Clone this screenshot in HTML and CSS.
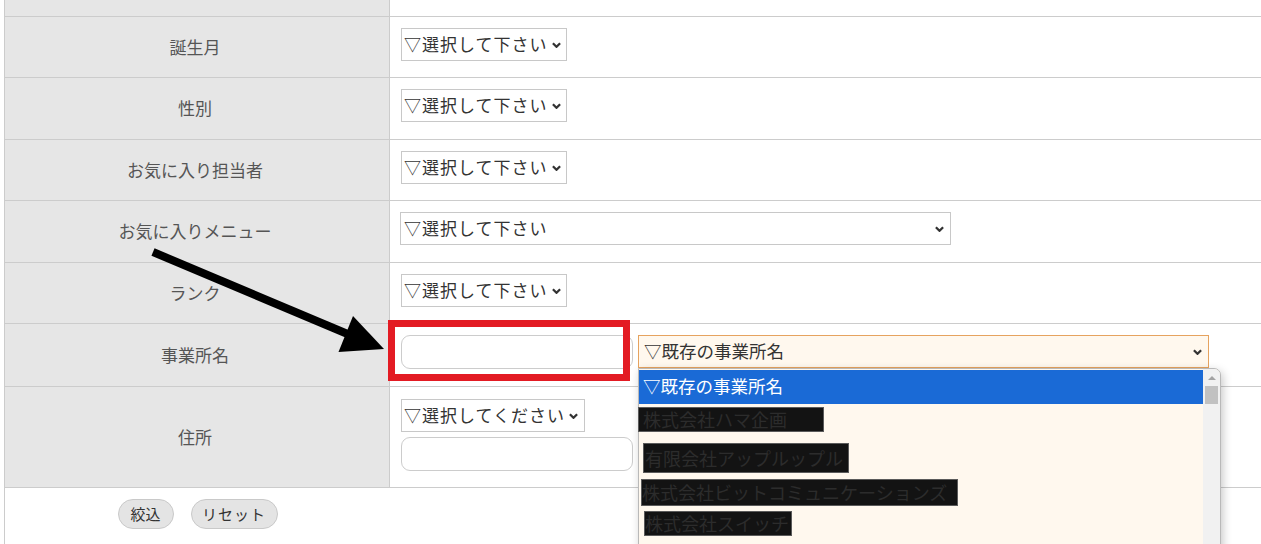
FILE: index.html
```html
<!DOCTYPE html>
<html lang="ja">
<head>
<meta charset="utf-8">
<title>検索フォーム</title>
<link rel="stylesheet" href="styles.css">
</head>
<body>
<div class="page">
  <div class="form">
    <div class="row h-top"><div class="label"></div><div class="value"></div></div>
    <div class="row h61"><div class="label">誕生月</div>
      <div class="value"><div class="select s-short"><span class="sel-text">▽選択して下さい</span><svg class="chev" viewBox="0 0 10 6"><path d="M1 1 L5 5 L9 1" /></svg></div></div></div>
    <div class="row h62"><div class="label">性別</div>
      <div class="value"><div class="select s-short"><span class="sel-text">▽選択して下さい</span><svg class="chev" viewBox="0 0 10 6"><path d="M1 1 L5 5 L9 1" /></svg></div></div></div>
    <div class="row h61"><div class="label">お気に入り担当者</div>
      <div class="value"><div class="select s-short"><span class="sel-text">▽選択して下さい</span><svg class="chev" viewBox="0 0 10 6"><path d="M1 1 L5 5 L9 1" /></svg></div></div></div>
    <div class="row h62"><div class="label">お気に入りメニュー</div>
      <div class="value"><div class="select s-wide"><span class="sel-text">▽選択して下さい</span><svg class="chev" viewBox="0 0 10 6"><path d="M1 1 L5 5 L9 1" /></svg></div></div></div>
    <div class="row h61"><div class="label">ランク</div>
      <div class="value"><div class="select s-short"><span class="sel-text">▽選択して下さい</span><svg class="chev" viewBox="0 0 10 6"><path d="M1 1 L5 5 L9 1" /></svg></div></div></div>
    <div class="row h63"><div class="label">事業所名</div>
      <div class="value biz">
        <div class="text-input"></div>
        <div class="select s-biz"><span class="sel-text">▽既存の事業所名</span><svg class="chev" viewBox="0 0 10 6"><path d="M1 1 L5 5 L9 1" /></svg></div>
      </div></div>
    <div class="row h101"><div class="label">住所</div>
      <div class="value addr">
        <div class="select s-addr"><span class="sel-text">▽選択してください</span><svg class="chev" viewBox="0 0 10 6"><path d="M1 1 L5 5 L9 1" /></svg></div>
        <div class="text-input"></div>
      </div></div>
    <div class="btn-row">
      <div class="btn-cell">
        <button class="btn btn-filter">絞込</button>
        <button class="btn btn-reset">リセット</button>
      </div>
    </div>
  </div>

  <div class="dropdown">
    <div class="opts">
      <div class="opt-selected">▽既存の事業所名</div>
      <div class="bar b1">株式会社ハマ企画</div>
      <div class="bar b2">有限会社アップルップル</div>
      <div class="bar b3">株式会社ビットコミュニケーションズ</div>
      <div class="bar b4">株式会社スイッチ</div>
    </div>
    <div class="scrollbar">
      <div class="sb-up"></div>
      <div class="sb-thumb"></div>
    </div>
  </div>

  <svg class="annot" viewBox="0 0 1261 544" width="1261" height="544">
    <rect x="391.5" y="323.5" width="235" height="54" fill="none" stroke="#e31b23" stroke-width="7"/>
    <line x1="153" y1="252" x2="350" y2="335" stroke="#000" stroke-width="8"/>
    <polygon points="353,316 338.5,352 384,349" fill="#000"/>
  </svg>
</div>
</body>
</html>
```

FILE: styles.css
```css
* { box-sizing: border-box; }
html, body { margin: 0; padding: 0; background: #fff; }
body {
  font-family: "Noto Sans CJK JP", "Noto Sans", sans-serif;
  color: #333;
  overflow: hidden;
  width: 1261px;
  height: 544px;
}
.page { position: relative; width: 1261px; height: 544px; overflow: hidden; }

.form {
  margin-left: 4px;
  width: 1300px;
  border-left: 1px solid #cccccc;
  height: 544px;
}
.row {
  display: flex;
  border-bottom: 1px solid #cccccc;
}
.h-top { height: 17px; }
.h61 { height: 61px; }
.h62 { height: 62px; }
.h63 { height: 63px; }
.h101 { height: 101px; }

.label {
  width: 385px;
  flex: none;
  background: #e6e6e6;
  border-right: 1px solid #cccccc;
  display: flex;
  align-items: center;
  justify-content: center;
  font-size: 17px;
  color: #555;
  padding-right: 4px;
  padding-bottom: 2px;
}
.value {
  flex: 1;
  display: flex;
  align-items: flex-start;
  padding: 11px 0 0 11px;
}
.value.biz { gap: 5px; }
.value.addr { flex-direction: column; padding-top: 12px; gap: 5px; }

.select {
  height: 33px;
  border: 1px solid #c8c8c8;
  background: #fff;
  display: flex;
  align-items: center;
  padding-left: 2px;
  font-size: 17px;
  letter-spacing: 1px;
  color: #333;
  line-height: 31px;
}
.sel-text { white-space: nowrap; margin-top: -3px; }
.chev {
  width: 9px;
  height: 6px;
  margin-left: auto;
  margin-right: 6px;
  fill: none;
  stroke: #333;
  stroke-width: 2.5;
}
.s-short { width: 166px; }
.s-short .chev { margin-right: 5px; }
.s-wide { width: 551px; margin-left: -1px; }
.s-wide .sel-text { padding-left: 1px; }
.s-addr { width: 184px; }
.s-biz {
  width: 571px;
  background: #fff8ee;
  border-color: #e6a35f;
  font-size: 17.5px;
  letter-spacing: 0;
  padding-left: 5px;
}
.s-biz .sel-text { margin-top: -2px; }
.s-biz .chev { margin-right: 6px; }

.text-input {
  width: 232px;
  height: 34px;
  border: 1px solid #cccccc;
  border-radius: 9px;
  background: #fff;
}

.btn-row { display: flex; height: 56px; }
.btn-cell {
  width: 385px;
  display: flex;
  justify-content: center;
  align-items: flex-start;
  padding-top: 11px;
  gap: 17px;
}
.btn {
  font-family: "Noto Sans CJK JP", "Noto Sans", sans-serif;
  font-size: 15px;
  color: #333;
  background: #e4e4e4;
  border: 1px solid #c9c9c9;
  border-radius: 15px;
  height: 30px;
  padding: 0;
  line-height: 26px;
}
.btn-filter { width: 56px; }
.btn-reset { width: 87px; letter-spacing: 1px; }

.dropdown {
  position: absolute;
  left: 638px;
  top: 368px;
  width: 583px;
  height: 200px;
  background: #fff8ee;
  border: 1px solid #b9b9b9;
  border-top-right-radius: 7px;
  box-shadow: 2px 3px 10px rgba(0, 0, 0, 0.22);
  display: flex;
}
.opts {
  flex: 1;
  padding-top: 1px;
  display: flex;
  flex-direction: column;
  align-items: flex-start;
}
.opt-selected {
  align-self: stretch;
  height: 34px;
  background: #1a6ad6;
  color: #fff;
  font-size: 17.5px;
  line-height: 32px;
  padding-left: 4px;
  white-space: nowrap;
}
.bar {
  background: #131313;
  border: 1px solid #5a5a5a;
  color: #2c2c2c;
  font-size: 18px;
  white-space: nowrap;
  overflow: hidden;
}
.b1 { margin: 3px 0 0 -1px; width: 186px; height: 25px; line-height: 23px; padding-left: 4px; }
.b2 { margin: 11px 0 0 4px; width: 206px; height: 30px; line-height: 28px; padding-left: 1px; }
.b3 { margin: 6px 0 0 2px; width: 317px; height: 27px; line-height: 25px; padding-left: 0; }
.b4 { margin: 5px 0 0 5px; width: 148px; height: 25px; line-height: 23px; padding-left: 0; }

.scrollbar {
  width: 17px;
  flex: none;
  background: #f1f1f1;
  border-top-right-radius: 6px;
  display: flex;
  flex-direction: column;
  align-items: center;
}
.sb-up {
  margin-top: 7px;
  width: 0;
  height: 0;
  border-left: 4px solid transparent;
  border-right: 4px solid transparent;
  border-bottom: 4px solid #a3a3a3;
}
.sb-thumb {
  margin-top: 6px;
  width: 13px;
  height: 18px;
  background: #c1c1c1;
}

.annot {
  position: absolute;
  left: 0;
  top: 0;
  pointer-events: none;
}
```
